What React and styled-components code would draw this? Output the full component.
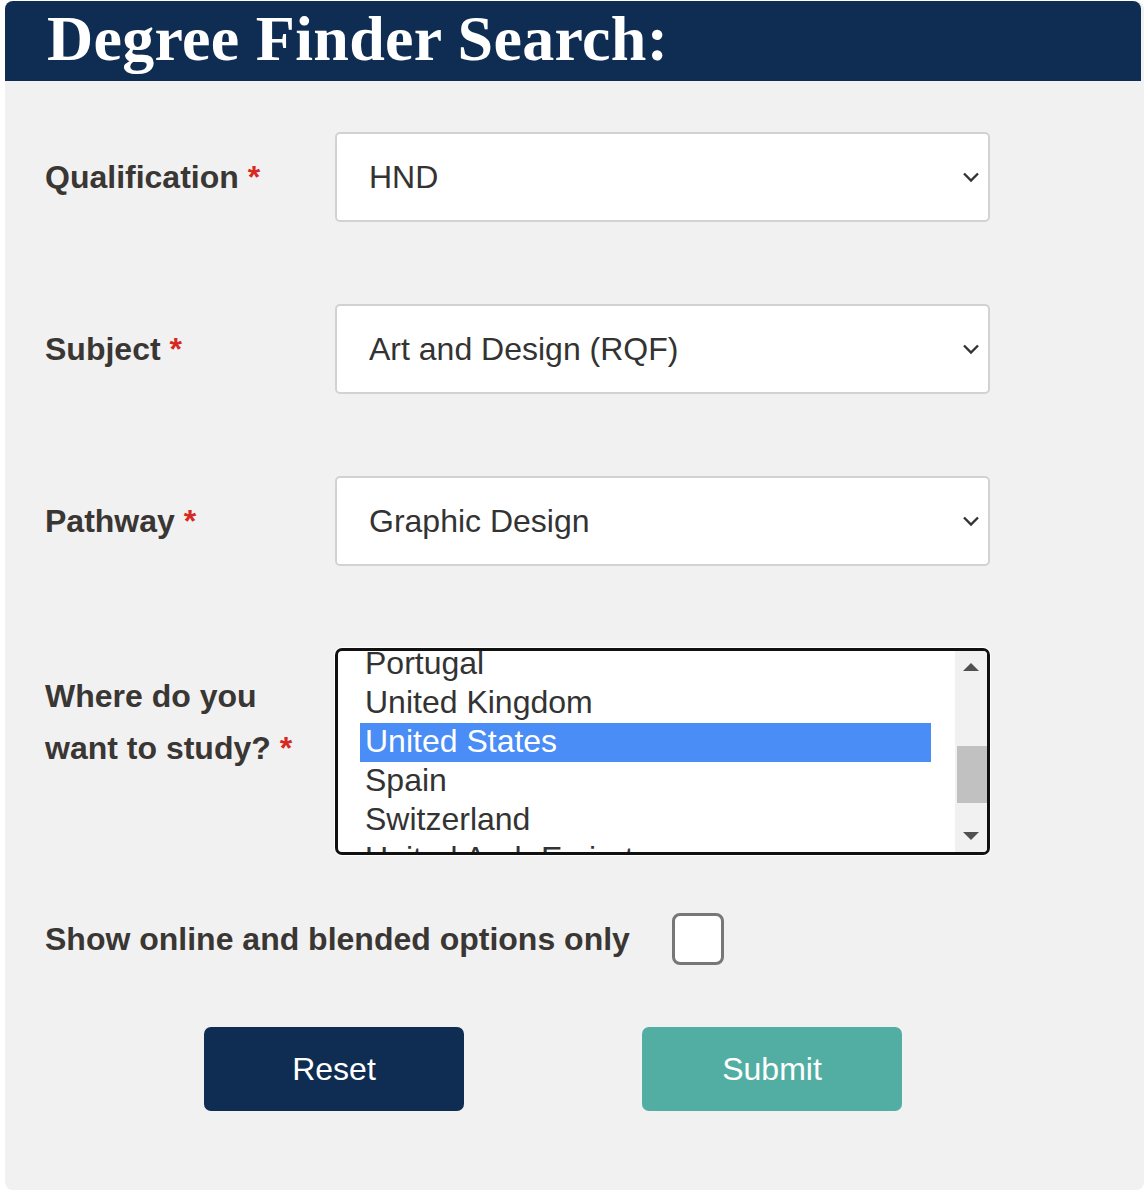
import React from 'react';
import styled, { createGlobalStyle } from "styled-components";

const GlobalStyle = createGlobalStyle`
  body {
    margin: 0;
    background: #fff;
    font-family: "Liberation Sans", Arial, sans-serif;
  }
`

const Card = styled.div`
  margin: 1px 0 0 5px;
  width: 1139px;
  height: 1189px;
  box-sizing: border-box;
  background: #f1f1f1;
  border-radius: 8px;
`
const Header = styled.h1`
  margin: 0;
  width: 1136px;
  height: 80px;
  box-sizing: border-box;
  padding-left: 42px;
  background: #0f2d52;
  border-radius: 8px 8px 0 0;
  color: #fff;
  font-family: "Liberation Serif", "Times New Roman", serif;
  font-weight: bold;
  font-size: 64px;
  letter-spacing: 0.3px;
  line-height: 76px;
  white-space: nowrap;
`
const Form = styled.form`
  display: flex;
  flex-direction: column;
  padding: 51px 0 0 40px;
`
const Fields = styled.div`
  display: flex;
  flex-direction: column;
  gap: 82px;
`
const Row = styled.div`
  display: grid;
  grid-template-columns: 290px 655px;
  align-items: ${p => (p.$top ? "start" : "center")};
`
const Label = styled.label`
  max-width: ${p => (p.$wide ? "none" : "260px")};
  padding-top: ${p => p.$offset || 0}px;
  color: #3a3633;
  font-weight: bold;
  font-size: 32px;
  line-height: 52px;
  white-space: ${p => (p.$wide ? "nowrap" : "normal")};
`
const Star = styled.span`
  color: #d6291f;
`
const SelectWrap = styled.div`
  position: relative;
  width: 655px;
  height: 90px;
`
const Select = styled.select`
  appearance: none;
  width: 100%;
  height: 100%;
  box-sizing: border-box;
  padding: 0 50px 0 32px;
  border: 2px solid #d2d2d2;
  border-radius: 5px;
  background: #fff;
  color: #333;
  font-family: "Liberation Sans", Arial, sans-serif;
  font-size: 32px;
  outline: none;
`
const Chevron = styled.svg`
  position: absolute;
  right: 10px;
  top: 39px;
  pointer-events: none;
`
const ListBox = styled.div`
  display: flex;
  width: 655px;
  height: 207px;
  box-sizing: border-box;
  border: 3px solid #111;
  border-radius: 7px;
  background: #fff;
  overflow: hidden;
  box-shadow: 0 0 0 1px #fff;
`
const Viewport = styled.div`
  flex: 1;
  overflow: hidden;
  padding: 0 24px 0 22px;
`
const OptionList = styled.ul`
  list-style: none;
  margin: -6px 0 0;
  padding: 0;
`
const Option = styled.li`
  height: 39px;
  padding-left: 5px;
  line-height: 37px;
  font-size: 32px;
  color: ${p => (p.$selected ? "#fff" : "#333")};
  background: ${p => (p.$selected ? "#4a8df6" : "transparent")};
  white-space: nowrap;
`
const ScrollBar = styled.div`
  display: flex;
  flex-direction: column;
  width: 32px;
  background: #f1f1f1;
`
const ArrowBtn = styled.div`
  height: 32px;
  display: flex;
  align-items: center;
  justify-content: center;
`
const Arrow = styled.span`
  width: 0;
  height: 0;
  border-left: 8px solid transparent;
  border-right: 8px solid transparent;
  ${p => (p.$down ? "border-top: 8px solid #505050;" : "border-bottom: 8px solid #505050;")}
`
const Track = styled.div`
  flex: 1;
`
const Thumb = styled.div`
  margin: 63px 0 0 2px;
  height: 57px;
  background: #c1c1c1;
`
const CheckRow = styled.div`
  display: flex;
  align-items: center;
  gap: 42px;
  margin-top: 58px;
`
const CheckBox = styled.span`
  display: block;
  width: 52px;
  height: 52px;
  box-sizing: border-box;
  border: 3px solid #777;
  border-radius: 8px;
  background: #fff;
`
const Buttons = styled.div`
  display: flex;
  gap: 178px;
  margin: 62px 0 0 159px;
`
const Button = styled.button`
  width: 260px;
  height: 84px;
  border: none;
  border-radius: 7px;
  background: ${p => p.$bg};
  color: #fff;
  font-family: "Liberation Sans", Arial, sans-serif;
  font-size: 32px;
  cursor: pointer;
`

const selects = [
  { label: "Qualification", value: "HND" },
  { label: "Subject", value: "Art and Design (RQF)" },
  { label: "Pathway", value: "Graphic Design" },
]

const countries = ["Portugal", "United Kingdom", "United States", "Spain", "Switzerland", "United Arab Emirates"]

const App = () => {
  return (
    <React.Fragment>
      <GlobalStyle />
      <Card>
        <Header>Degree Finder Search:</Header>
        <Form>
          <Fields>
            {selects.map(s => (
              <Row key={s.label}>
                <Label>{s.label} <Star>*</Star></Label>
                <SelectWrap>
                  <Select defaultValue={s.value}>
                    <option>{s.value}</option>
                  </Select>
                  <Chevron width="18" height="12" viewBox="0 0 18 12">
                    <path d="M2 2.5 L9 9.5 L16 2.5" fill="none" stroke="#333" strokeWidth="2.4" />
                  </Chevron>
                </SelectWrap>
              </Row>
            ))}
            <Row $top>
              <Label $offset={22}>Where do you want to study? <Star>*</Star></Label>
              <ListBox role="listbox">
                <Viewport>
                  <OptionList>
                    {countries.map(c => (
                      <Option key={c} $selected={c === "United States"}>{c}</Option>
                    ))}
                  </OptionList>
                </Viewport>
                <ScrollBar>
                  <ArrowBtn><Arrow /></ArrowBtn>
                  <Track><Thumb /></Track>
                  <ArrowBtn><Arrow $down /></ArrowBtn>
                </ScrollBar>
              </ListBox>
            </Row>
          </Fields>
          <CheckRow>
            <Label $wide>Show online and blended options only</Label>
            <CheckBox />
          </CheckRow>
          <Buttons>
            <Button type="button" $bg="#0f2d52">Reset</Button>
            <Button type="button" $bg="#52aea3">Submit</Button>
          </Buttons>
        </Form>
      </Card>
    </React.Fragment>
  )
}
export default App;
